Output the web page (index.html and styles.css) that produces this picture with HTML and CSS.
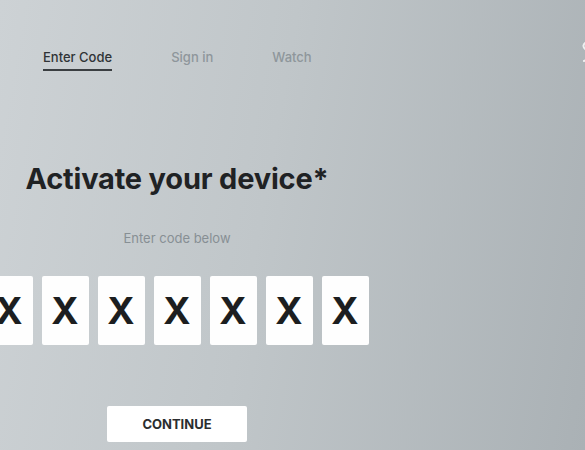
FILE: index.html
```html
<!DOCTYPE html>
<html lang="en">
<head>
  <meta charset="UTF-8">
  <meta name="viewport" content="width=device-width, initial-scale=1.0">
  <title>Activate your device</title>

  <link rel="stylesheet" href="styles.css">
</head>
<body>
  <div class="nav">
    <a class="nav-link active" href="#">Enter Code</a>
    <a class="nav-link" href="#">Sign in</a>
    <a class="nav-link" href="#">Watch</a>
  </div>

  <svg class="logo" width="14" height="26" viewBox="0 0 14 26">
    <path d="M11 3 C 4 5, 4 10, 9 12 C 13 14, 12 20, 6 23" fill="none" stroke="#ffffff" stroke-width="2" stroke-linecap="round"/>
  </svg>

  <div class="main">
    <h1>Activate your device*</h1>
    <p class="hint">Enter code below</p>
    <div class="code-row">
      <div class="code-box">X</div>
      <div class="code-box">X</div>
      <div class="code-box">X</div>
      <div class="code-box">X</div>
      <div class="code-box">X</div>
      <div class="code-box">X</div>
      <div class="code-box">X</div>
    </div>
    <button class="continue">CONTINUE</button>
  </div>
</body>
</html>
```

FILE: styles.css
```css
html, body {
  height: 100%;
}

body {
  margin: 0;
  font-family: Inter, "Noto Sans", sans-serif;
  background: linear-gradient(100deg, #cdd2d5 0%, #c0c6c9 45%, #aab1b5 100%);
  overflow: hidden;
  position: relative;
}

.nav {
  display: flex;
  gap: 59px;
  padding: 49px 0 0 43px;
}

.nav-link {
  font-size: 13px;
  font-weight: 500;
  color: #8e969b;
  text-decoration: none;
  padding-bottom: 4px;
  border-bottom: 2px solid transparent;
}

.nav-link.active {
  color: #2f3336;
  border-bottom-color: #3a3e41;
}

.logo {
  position: absolute;
  top: 38px;
  right: -7px;
  opacity: 0.8;
}

.main {
  width: 354px;
  display: flex;
  flex-direction: column;
  align-items: center;
}

h1 {
  margin: 90px 0 0;
  font-size: 29px;
  font-weight: 700;
  color: #1f2224;
  letter-spacing: -0.2px;
}

.hint {
  margin: 34px 0 0;
  font-size: 13px;
  color: #878f94;
}

.code-row {
  display: flex;
  justify-content: center;
  gap: 9px;
  width: 100%;
  margin-top: 30px;
}

.code-box {
  flex: none;
  width: 47px;
  height: 69px;
  background: #fefefe;
  border-radius: 2px;
  display: flex;
  align-items: center;
  justify-content: center;
  font-size: 37px;
  font-weight: 700;
  color: #1c1e20;
}

.continue {
  margin-top: 61px;
  width: 140px;
  height: 36px;
  background: #ffffff;
  border: none;
  border-radius: 2px;
  font-family: Inter, "Noto Sans", sans-serif;
  font-size: 13px;
  font-weight: 700;
  color: #2a2d2f;
  cursor: pointer;
}
```
